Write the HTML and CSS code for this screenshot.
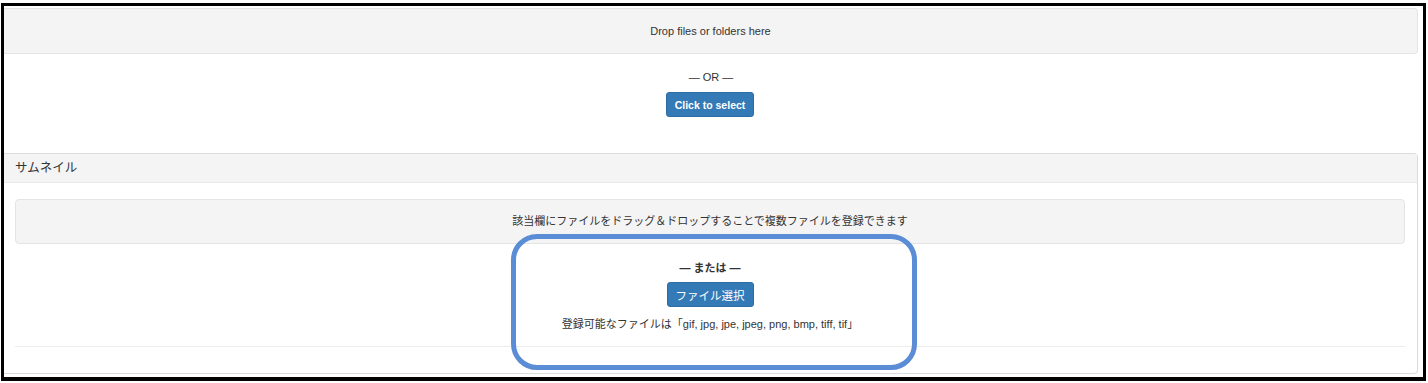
FILE: index.html
```html
<!DOCTYPE html>
<html lang="ja">
<head>
<meta charset="utf-8">
<title>Upload</title>
<link rel="stylesheet" href="styles.css">
</head>
<body>
<div class="frame">
  <div class="dropzone top-drop">Drop files or folders here</div>
  <div class="select-block">
    <div class="or">— OR —</div>
    <button class="btn btn-bold">Click to select</button>
  </div>
  <div class="panel">
    <div class="panel-heading">サムネイル</div>
    <div class="panel-body">
      <div class="dropzone inner-drop">該当欄にファイルをドラッグ＆ドロップすることで複数ファイルを登録できます</div>
      <div class="or or-jp">— または —</div>
      <button class="btn btn-jp">ファイル選択</button>
      <div class="types">登録可能なファイルは「gif, jpg, jpe, jpeg, png, bmp, tiff, tif」</div>
      <div class="rule"></div>
    </div>
  </div>
  <div class="highlight"></div>
</div>
</body>
</html>
```
FILE: styles.css
```css
* { box-sizing: border-box; }
html, body { margin: 0; padding: 0; background: #fff; }
body {
  font-family: "Liberation Sans", Arial, "Noto Sans CJK JP", sans-serif;
  color: #333;
  font-size: 11px;
}
.frame {
  position: relative;
  margin: 3px 2px 0 1px;
  border: 3px solid #000;
  border-bottom-width: 4px;
  height: 378px;
  padding: 2px 5px 0 0;
  overflow: hidden;
}
.dropzone {
  display: flex;
  align-items: center;
  justify-content: center;
  background: #f4f4f4;
  border: 1px solid #e4e4e4;
  border-radius: 4px;
  color: #333;
}
.top-drop {
  height: 46px;
  font-size: 11px;
  border-left: none;
  border-radius: 0 4px 4px 0;
  padding-bottom: 1px;
}
.select-block {
  display: flex;
  flex-direction: column;
  align-items: center;
  padding-top: 16px;
  height: 99px;
}
.or {
  font-size: 11px;
  line-height: 15px;
  height: 15px;
}
.btn {
  margin-top: 7px;
  height: 25px;
  background: #337ab7;
  border: 1px solid #2e6da4;
  border-radius: 3px;
  color: #fff;
  font-family: "Liberation Sans", Arial, "Noto Sans CJK JP", sans-serif;
  white-space: nowrap;
  cursor: pointer;
}
.btn-bold {
  font-weight: bold;
  font-size: 10.5px;
  padding: 0 8px;
  margin-right: 2px;
}
.panel {
  border: 1px solid #dcdcdc;
  border-left: none;
  border-radius: 0 4px 4px 0;
  height: 221px;
  display: flex;
  flex-direction: column;
}
.panel-heading {
  height: 29px;
  background: #f4f4f4;
  border-bottom: 1px solid #eaeaea;
  font-size: 12.5px;
  line-height: 28px;
  padding-left: 11px;
  color: #333;
}
.panel-body {
  padding: 16px 12px 0 11px;
  display: flex;
  flex-direction: column;
  align-items: center;
}
.inner-drop {
  align-self: stretch;
  height: 45px;
  font-size: 11px;
  padding-bottom: 4px;
}
.or-jp {
  margin-top: 16px;
  font-weight: bold;
  line-height: 16px;
  height: 16px;
}
.btn-jp {
  margin-top: 6px;
  font-size: 11.5px;
  padding: 0 8px;
}
.types {
  margin-top: 10px;
  font-size: 11px;
  line-height: 14px;
}
.rule {
  align-self: stretch;
  margin-top: 15px;
  border-top: 1px solid #ececec;
}
.highlight {
  position: absolute;
  left: 507px;
  top: 228px;
  width: 406px;
  height: 136px;
  border: 5px solid #5a8dd5;
  border-radius: 26px;
  pointer-events: none;
}
```
